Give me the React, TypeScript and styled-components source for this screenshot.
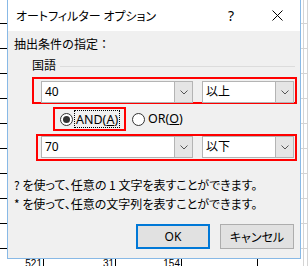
import React from 'react';
import styled, { createGlobalStyle } from 'styled-components';

const JP = `"Noto Sans CJK JP", sans-serif`;
const LATIN = `"Noto Sans", "Noto Sans CJK JP", sans-serif`;

const GlobalStyle = createGlobalStyle`
  html, body { margin: 0; padding: 0; }
  body { font-family: ${JP}; color: #000; }
`;

const sheetRows = [24, 25, 25, 25, 25, 25, 25, 25, 25, 25];
const lastRow = ['521', '31', '154', '', '', ''];

const App: React.FC = () => (
  <>
    <GlobalStyle />
    <Sheet>
      {sheetRows.map((h, i) => (
        <SheetRow key={i} $h={h}>
          {lastRow.map((_, c) => (
            <SheetCell key={c} $outside={c > 3} />
          ))}
        </SheetRow>
      ))}
      <SheetRow $h={25}>
        {lastRow.map((v, c) => (
          <SheetCell key={c} $outside={c > 3}>
            {v}
          </SheetCell>
        ))}
      </SheetRow>

      <Dialog>
        <TitleBar>
          <Title>オートフィルター オプション</Title>
          <CaptionButton>?</CaptionButton>
          <CaptionButton>
            <svg width="11" height="11" viewBox="0 0 11 11">
              <path d="M0.5 0.5 L10.5 10.5 M10.5 0.5 L0.5 10.5" stroke="#000" strokeWidth="1" />
            </svg>
          </CaptionButton>
        </TitleBar>

        <Body>
          <Label $top={5}>抽出条件の指定：</Label>
          <GroupHeader>
            <span>国語</span>
            <GroupLine />
          </GroupHeader>

          <ComboRow $left={18} $width={265} $top={4} $padLeft={7} $padTop={2}>
            <Combo $w={152} value="40" />
            <Combo $w={92} value="以上" />
          </ComboRow>

          <RadioRow>
            <Marked>
              <RadioMark $checked />
              <FocusLabel>
                AND(<u>A</u>)
              </FocusLabel>
            </Marked>
            <RadioMark />
            <RadioText>
              OR(<u>O</u>)
            </RadioText>
          </RadioRow>

          <ComboRow $left={22} $width={261} $top={3} $padLeft={3} $padTop={0}>
            <Combo $w={152} value="70" />
            <Combo $w={92} value="以下" />
          </ComboRow>

          <Hint $top={16}>? を使って、任意の 1 文字を表すことができます。</Hint>
          <Hint $top={3}>* を使って、任意の文字列を表すことができます。</Hint>

          <ButtonRow>
            <Button $default>OK</Button>
            <Button>キャンセル</Button>
          </ButtonRow>
        </Body>
      </Dialog>
    </Sheet>
  </>
);

export default App;

interface ComboProps {
  $w: number;
  value: string;
}
const Combo: React.FC<ComboProps> = ({ $w, value }) => (
  <ComboBox $w={$w}>
    <ComboText>{value}</ComboText>
    <DropButton>
      <svg width="8" height="5" viewBox="0 0 8 5">
        <path d="M0.5 0.5 L4 4 L7.5 0.5" stroke="#555" strokeWidth="1" fill="none" />
      </svg>
    </DropButton>
  </ComboBox>
);

const Sheet = styled.div`
  position: relative;
  width: 308px;
  height: 266px;
  overflow: hidden;
  background: #fff;
`;

const SheetRow = styled.div<{ $h: number }>`
  display: grid;
  grid-template-columns: 44px 72px 66px 76px 46px 1fr;
  height: ${({ $h }) => $h}px;
`;

const SheetCell = styled.div<{ $outside?: boolean }>`
  box-sizing: border-box;
  border-right: 1px solid ${({ $outside }) => ($outside ? '#d4d4d4' : '#000')};
  border-bottom: 1px solid ${({ $outside }) => ($outside ? '#d4d4d4' : '#000')};
  display: flex;
  align-items: flex-end;
  justify-content: flex-end;
  padding: 0 1px 3px 0;
  font: 10px/12px "Liberation Sans", sans-serif;
`;

const Dialog = styled.div`
  position: absolute;
  left: 7px;
  top: -1px;
  width: 294px;
  height: 260px;
  box-sizing: border-box;
  border: 1px solid #88b9e6;
  background: #f0f0f0;
  display: flex;
  flex-direction: column;
`;

const TitleBar = styled.div`
  height: 31px;
  background: #fff;
  display: flex;
  align-items: center;
  padding-left: 8px;
  flex-shrink: 0;
`;

const Title = styled.div`
  flex: 1;
  font-size: 12px;
  font-feature-settings: 'palt';
  line-height: 16px;
`;

const CaptionButton = styled.div`
  width: 46px;
  height: 31px;
  display: flex;
  align-items: center;
  justify-content: center;
  font: 14px ${LATIN};
`;

const Body = styled.div`
  display: flex;
  flex-direction: column;
  padding-left: 6px;
`;

const Label = styled.div<{ $top: number }>`
  margin-top: ${({ $top }) => $top}px;
  font-size: 12px;
  line-height: 16px;
  white-space: nowrap;
`;

const GroupHeader = styled.div`
  margin: 5px 5px 0 18px;
  display: flex;
  align-items: center;
  font-size: 12px;
  line-height: 16px;
`;

const GroupLine = styled.div`
  flex: 1;
  height: 1px;
  margin: 2px 0 0 4px;
  background: #dcdcdc;
`;

const Marked = styled.div`
  box-sizing: border-box;
  border: 2px solid #ff0000;
  display: flex;
  align-items: center;
`;

const ComboRow = styled(Marked)<{
  $left: number;
  $width: number;
  $top: number;
  $padLeft: number;
  $padTop: number;
}>`
  margin-top: ${({ $top }) => $top}px;
  margin-left: ${({ $left }) => $left}px;
  width: ${({ $width }) => $width}px;
  height: 27px;
  align-items: flex-start;
  gap: 9px;
  padding: ${({ $padTop, $padLeft }) => `${$padTop}px 0 0 ${$padLeft}px`};
`;

const ComboBox = styled.div<{ $w: number }>`
  box-sizing: border-box;
  width: ${({ $w }) => $w}px;
  height: 22px;
  flex-shrink: 0;
  border: 1px solid #b4b4b4;
  background: #fff;
  display: flex;
`;

const ComboText = styled.div`
  flex: 1;
  padding-left: 3px;
  font: 12px/20px ${LATIN};
`;

const DropButton = styled.div`
  width: 17px;
  border-left: 1px solid #b4b4b4;
  background: #e5e5e5;
  display: flex;
  align-items: center;
  justify-content: center;
`;

const RadioRow = styled.div`
  margin: 3px 0 0 39px;
  display: flex;
  align-items: center;
  font: 12.5px ${LATIN};

  ${Marked} {
    width: 73px;
    height: 24px;
    padding-left: 5px;
    margin-right: 6px;
  }
`;

const RadioMark = styled.span<{ $checked?: boolean }>`
  box-sizing: border-box;
  width: 13px;
  height: 13px;
  flex-shrink: 0;
  border: 1px solid #333;
  border-radius: 50%;
  background: #fff;
  display: flex;
  align-items: center;
  justify-content: center;

  &::after {
    content: '';
    width: 7px;
    height: 7px;
    border-radius: 50%;
    background: ${({ $checked }) => ($checked ? '#333' : 'transparent')};
  }
`;

const FocusLabel = styled.span`
  margin-left: 1px;
  padding: 0 1px;
  height: 18px;
  line-height: 17px;
  box-sizing: border-box;
  border: 1px dotted #000;
  white-space: nowrap;
`;

const RadioText = styled.span`
  margin-left: 3px;
  line-height: 18px;
  white-space: nowrap;
`;

const Hint = styled(Label)`
  font-feature-settings: 'palt';
`;

const ButtonRow = styled.div`
  margin: 12px 6px 0 0;
  display: flex;
  justify-content: flex-end;
  gap: 10px;
`;

const Button = styled.div<{ $default?: boolean }>`
  box-sizing: border-box;
  width: 74px;
  height: 25px;
  background: #e1e1e1;
  border: ${({ $default }) => ($default ? '2px solid #0078d7' : '1px solid #adadad')};
  display: flex;
  align-items: center;
  justify-content: center;
  font: 12px ${LATIN};
  font-feature-settings: 'palt';
`;
